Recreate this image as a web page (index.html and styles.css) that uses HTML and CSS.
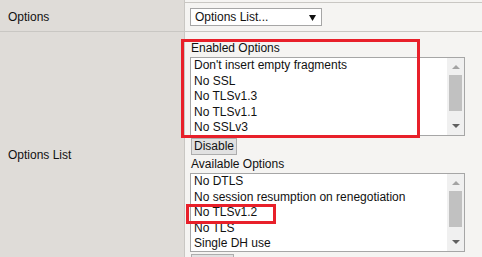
FILE: index.html
```html
<!DOCTYPE html>
<html lang="en">

<head>
    <meta charset="UTF-8">
    <meta name="viewport" content="width=device-width, initial-scale=1.0">
    <title>Options</title>
    <link rel="stylesheet" href="styles.css">
</head>

<body>
    <div class="row row-top">
        <div class="label-cell"></div>
        <div class="value-cell"></div>
    </div>

    <div class="row">
        <div class="label-cell">Options</div>
        <div class="value-cell">
            <div class="dropdown">
                <span>Options List...</span>
                <svg class="dropdown-arrow" width="7" height="6" viewBox="0 0 7 6">
                    <polygon points="0,0 7,0 3.5,6" fill="#111" />
                </svg>
            </div>
        </div>
    </div>

    <div class="row">
        <div class="label-cell">Options List</div>
        <div class="value-cell options-cell">
            <div class="list-title">Enabled Options</div>
            <div class="listbox">
                <div class="list-items">
                    <div class="item">Don't insert empty fragments</div>
                    <div class="item">No SSL</div>
                    <div class="item">No TLSv1.3</div>
                    <div class="item">No TLSv1.1</div>
                    <div class="item">No SSLv3</div>
                </div>
                <div class="scrollbar">
                    <span class="arrow arrow-up"></span>
                    <span class="thumb"></span>
                    <span class="arrow arrow-down"></span>
                </div>
            </div>
            <button class="btn">Disable</button>

            <div class="list-title">Available Options</div>
            <div class="listbox">
                <div class="list-items">
                    <div class="item">No DTLS</div>
                    <div class="item">No session resumption on renegotiation</div>
                    <div class="item">No TLSv1.2</div>
                    <div class="item">No TLS</div>
                    <div class="item">Single DH use</div>
                </div>
                <div class="scrollbar">
                    <span class="arrow arrow-up"></span>
                    <span class="thumb"></span>
                    <span class="arrow arrow-down"></span>
                </div>
            </div>
            <button class="btn">Enable</button>

            <!-- annotation boxes -->
            <div class="mark mark-enabled"></div>
            <div class="mark mark-tls12"></div>
        </div>
    </div>
</body>

</html>
```

FILE: styles.css
```css
body {
    margin: 0;
    padding: 0;
    background-color: #f5f4f2;
    font-family: "Liberation Sans", Arial, sans-serif;
    font-size: 12px;
    color: #111;
    overflow: hidden;
}

.row {
    display: grid;
    grid-template-columns: 185px 1fr;
    border-bottom: 1px solid #c9c7c3;
}

.row-top {
    height: 2px;
}

.label-cell {
    background-color: #dfdcd8;
    border-right: 1px solid #c9c7c3;
    padding-left: 8px;
    display: flex;
    align-items: center;
    line-height: 16px;
}

.value-cell {
    padding: 5px 0 5px 5px;
    height: 18px;
}

.dropdown {
    width: 126px;
    height: 16px;
    border: 1px solid #a6a6a6;
    background-color: #fff;
    display: flex;
    align-items: center;
    justify-content: space-between;
    padding: 0 0 0 4px;
    line-height: 15px;
}

.dropdown-arrow {
    margin-right: 5px;
    margin-top: 1px;
}

.options-cell {
    position: relative;
    height: auto;
    padding: 8px 0 5px 5px;
}

.list-title {
    line-height: 16px;
    height: 17px;
    padding-left: 1px;
}

.listbox {
    width: 273px;
    height: 77px;
    border: 1px solid #a6a6a6;
    background-color: #fff;
    display: flex;
    overflow: hidden;
}

.list-items {
    flex-grow: 1;
    padding-left: 3px;
}

.item {
    line-height: 15.5px;
    height: 15.5px;
    white-space: nowrap;
}

.scrollbar {
    width: 17px;
    background-color: #f0f0f0;
    display: flex;
    flex-direction: column;
    align-items: center;
}

.thumb {
    width: 13px;
    height: 36px;
    background-color: #c1c1c1;
    margin-top: 6px;
}

.arrow {
    width: 0;
    height: 0;
    border-left: 4px solid transparent;
    border-right: 4px solid transparent;
}

.arrow-up {
    border-bottom: 4px solid #a3a3a3;
    margin-top: 7px;
}

.arrow-down {
    border-top: 4px solid #606060;
    margin-top: 13px;
}

.btn {
    font-family: "Liberation Sans", Arial, sans-serif;
    font-size: 12px;
    color: #111;
    background-color: #e1e1e1;
    border: 1px solid #adadad;
    padding: 0 2px;
    height: 17px;
    line-height: 15px;
    margin: 2px 0 1px 1px;
    display: block;
}

.mark {
    position: absolute;
    border: 3px solid #e8202a;
}

.mark-enabled {
    left: -4px;
    top: 7px;
    width: 233px;
    height: 93px;
}

.mark-tls12 {
    left: 1px;
    top: 172px;
    width: 84px;
    height: 14px;
}
```
